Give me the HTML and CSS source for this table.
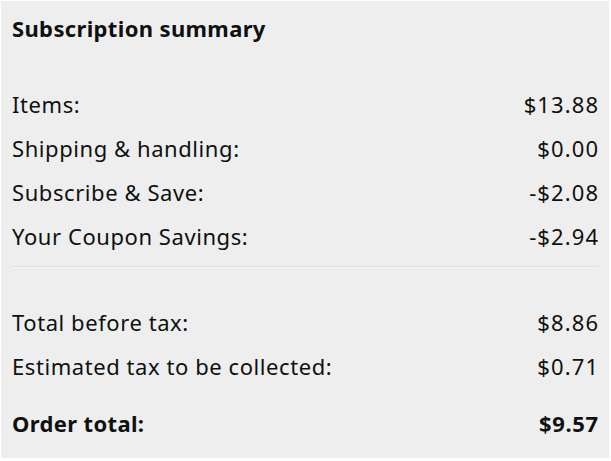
FILE: index.html
```html
<!DOCTYPE html>
<html>
<head>
<meta charset="utf-8">
<link rel="stylesheet" href="styles.css">
</head>
<body>
<div class="panel">
  <h2 class="title">Subscription summary</h2>
  <div class="group first">
    <div class="row"><span class="label">Items:</span><span class="value">$13.88</span></div>
    <div class="row"><span class="label">Shipping &amp; handling:</span><span class="value">$0.00</span></div>
    <div class="row"><span class="label">Subscribe &amp; Save:</span><span class="value">-$2.08</span></div>
    <div class="row"><span class="label">Your Coupon Savings:</span><span class="value">-$2.94</span></div>
  </div>
  <div class="divider"></div>
  <div class="group second">
    <div class="row"><span class="label">Total before tax:</span><span class="value">$8.86</span></div>
    <div class="row"><span class="label">Estimated tax to be collected:</span><span class="value">$0.71</span></div>
  </div>
  <div class="row total"><span class="label">Order total:</span><span class="value">$9.57</span></div>
</div>
</body>
</html>
```
FILE: styles.css
```css
html, body {
  margin: 0;
  padding: 0;
  background: #ffffff;
}
body {
  font-family: "Noto Sans", "DejaVu Sans", sans-serif;
  color: #0f1111;
}
.panel {
  margin: 1px 2px 0 1px;
  height: 457px;
  box-sizing: border-box;
  background: #eeeeee;
  padding: 11.5px 11px 0 11px;
}
.title {
  margin: 0;
  font-size: 22px;
  font-weight: 700;
  line-height: 30px;
  letter-spacing: 0.35px;
}
.group.first {
  margin-top: 39px;
}
.row {
  display: flex;
  justify-content: space-between;
  font-size: 22px;
  line-height: 44px;
  height: 44px;
}
.label {
  letter-spacing: 0.57px;
}
.value {
  letter-spacing: 1.1px;
  margin-right: -1.1px;
}
.divider {
  margin-top: 8px;
  height: 1px;
  background: #e0e0e0;
  border-bottom: 1px solid #f6f6f6;
}
.group.second {
  margin-top: 32px;
}
.row.total {
  margin-top: 13px;
  font-weight: 700;
}
.row.total .label {
  letter-spacing: 0.35px;
}
.row.total .value {
  letter-spacing: 0.6px;
  margin-right: -0.6px;
}
```
